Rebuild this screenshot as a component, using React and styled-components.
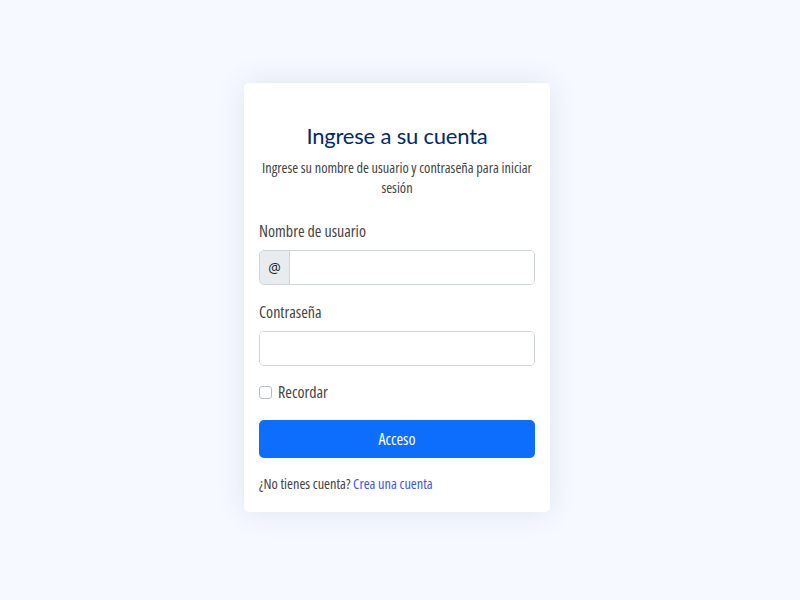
import styled, { createGlobalStyle } from "styled-components"

const GlobalStyle = createGlobalStyle`
  html, body {
    margin: 0;
    padding: 0;
    background: #f6f9ff;
    font-family: "Open Sans", "Noto Sans", sans-serif;
    color: #444444;
  }
`

const Page = styled.main`
  min-height: 600px;
  display: flex;
  justify-content: center;
  align-items: flex-start;
  padding: 83px 6px 0 0;
  box-sizing: border-box;
`

const Card = styled.div`
  width: 306px;
  box-sizing: border-box;
  background: #fff;
  border-radius: 5px;
  box-shadow: 0px 0 30px rgba(1, 41, 112, 0.1);
  padding: 39px 15px 18px;
  display: flex;
  flex-direction: column;
`

const Title = styled.h5`
  margin: 0;
  font-family: "Lato", "Inter", sans-serif;
  font-weight: 400;
  font-size: 22px;
  line-height: 28px;
  letter-spacing: -0.2px;
  color: #012970;
  text-align: center;
`

const Subtitle = styled.p`
  margin: 8px 0 0;
  font-size: 14.3px;
  line-height: 20px;
  text-align: center;
  color: #444;
  font-stretch: 85%;
`

const Field = styled.div`
  margin-top: ${(p) => p.$top}px;
  display: flex;
  flex-direction: column;
`

const Label = styled.label`
  font-size: 16px;
  line-height: 22px;
  color: #444;
  margin-bottom: 8px;
  font-stretch: 85%;
`

const InputGroup = styled.div`
  display: flex;
  height: 35px;
  border: 1px solid #ced4da;
  border-radius: 5px;
  box-sizing: border-box;
  overflow: hidden;
`

const Addon = styled.span`
  width: 29px;
  display: flex;
  align-items: center;
  justify-content: center;
  background: #e9ecef;
  border-right: 1px solid #ced4da;
  font-size: 14px;
  color: #212529;
`

const Input = styled.input`
  flex: 1;
  min-width: 0;
  border: none;
  outline: none;
  padding: 0 12px;
  font-size: 15px;
  background: #fff;
`

const CheckRow = styled.label`
  margin-top: 15px;
  display: flex;
  align-items: center;
  gap: 6px;
  font-size: 16px;
  line-height: 22px;
  color: #444;
  font-stretch: 85%;
`

const Box = styled.span`
  width: 11px;
  height: 11px;
  border: 1px solid #b8bdc2;
  border-radius: 3px;
  background: #fff;
`

const Button = styled.button`
  margin-top: 17px;
  height: 38px;
  border: none;
  border-radius: 5px;
  background: #0d6efd;
  color: #fff;
  font-family: "Open Sans", "Noto Sans", sans-serif;
  font-size: 16px;
  font-stretch: 85%;
`

const Footer = styled.p`
  margin: 16px 0 0;
  font-size: 14.3px;
  line-height: 20px;
  color: #444;
  font-stretch: 85%;

  a {
    color: #4154f1;
    text-decoration: none;
  }
`

export default function App() {
  return (
    <>
      <GlobalStyle />
      <Page>
        <Card>
          <Title>Ingrese a su cuenta</Title>
          <Subtitle>Ingrese su nombre de usuario y contraseña para iniciar sesión</Subtitle>
          <Field $top={22}>
            <Label>Nombre de usuario</Label>
            <InputGroup>
              <Addon>@</Addon>
              <Input type="text" />
            </InputGroup>
          </Field>
          <Field $top={16}>
            <Label>Contraseña</Label>
            <InputGroup>
              <Input type="password" />
            </InputGroup>
          </Field>
          <CheckRow>
            <Box />
            Recordar
          </CheckRow>
          <Button>Acceso</Button>
          <Footer>
            ¿No tienes cuenta? <a href="#">Crea una cuenta</a>
          </Footer>
        </Card>
      </Page>
    </>
  )
}
